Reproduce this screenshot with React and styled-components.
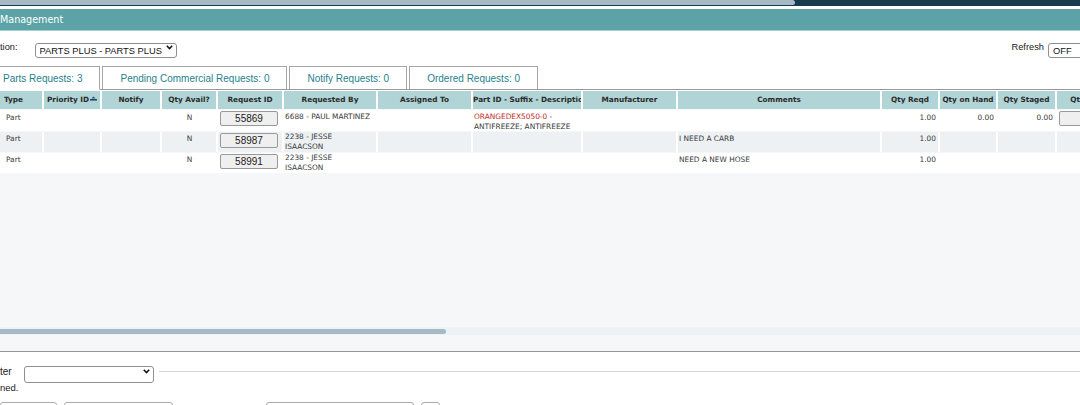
import React from "react";
import styled, { createGlobalStyle } from "styled-components";

const GlobalStyle = createGlobalStyle`
  html, body { margin: 0; padding: 0; background: #ffffff; overflow: hidden; }
  body { font-family: "Liberation Sans", Arial, sans-serif; color: #222; }
  * { box-sizing: border-box; }
`;

const Page = styled.div`
  width: 1080px;
  height: 405px;
  overflow: hidden;
`;

const TopStrip = styled.div`
  height: 6px;
  background: #173b4e;
  margin-bottom: 3px;
  display: flex;
`;

const TopThumb = styled.div`
  width: 795px;
  height: 4.5px;
  background: #a7b9c5;
  border-radius: 0 3px 3px 0;
`;

const TitleBar = styled.div`
  height: 22px;
  background: #5ca3a8;
  border-bottom: 1px solid #a6cfd1;
  color: #ffffff;
  font-family: "DejaVu Sans", Verdana, sans-serif;
  font-size: 9.6px;
  line-height: 21px;
`;

const Toolbar = styled.div`
  margin-top: 8px;
  height: 16px;
  display: flex;
  align-items: center;
  justify-content: space-between;
`;

const FieldGroup = styled.div`
  display: flex;
  align-items: center;
  margin-right: ${(p) => p.$mr || "0"};
`;

const Label = styled.span`
  font-size: ${(p) => p.$size || "9.3px"};
  color: #222;
  margin-right: ${(p) => p.$gap || "0px"};
`;

const SelectWrap = styled.div`
  position: relative;
  width: ${(p) => p.$w};
  height: ${(p) => p.$h || "15px"};
  flex: none;
`;

const Select = styled.select`
  appearance: none;
  -webkit-appearance: none;
  font-family: "Liberation Sans", Arial, sans-serif;
  font-size: 9.3px;
  width: 100%;
  height: 100%;
  padding: 0 0 0 4px;
  border: 1px solid #8f8f8f;
  border-radius: 3px;
  background: #ffffff;
  color: #111;
  margin: 0;
  outline: none;
`;

const Chevron = styled.svg`
  position: absolute;
  right: 4px;
  top: 50%;
  margin-top: -2.5px;
  pointer-events: none;
`;

const ChevronIcon = () => (
  <Chevron width="7" height="5" viewBox="0 0 7 5">
    <path d="M0.8 0.8 L3.5 3.6 L6.2 0.8" fill="none" stroke="#111" strokeWidth="1.5" />
  </Chevron>
);

const TabBar = styled.div`
  margin-top: 11px;
  display: flex;
  gap: 2px;
  border-bottom: 1px solid #9a9a9a;
  height: 24px;
`;

const Tab = styled.div`
  height: 24px;
  margin-bottom: -1px;
  padding: 0 17px;
  display: flex;
  align-items: center;
  border: 1px solid #a5a5a5;
  border-bottom: 1px solid ${(p) => (p.$active ? "#ffffff" : "#9a9a9a")};
  background: #ffffff;
  color: #277f8d;
  font-size: 10px;
  white-space: nowrap;
  margin-left: ${(p) => (p.$active ? "-15px" : "0")};
`;

const TablePanel = styled.div`
  margin-top: 1px;
  height: 261px;
  background: #f5f7f9;
  border-bottom: 1px solid #959595;
  display: flex;
  flex-direction: column;
`;

const COLS = "42px 56px 58px 54px 64px 92px 93px 108px 93px 202px 56px 56px 57px 80px";

const HeadRow = styled.div`
  display: grid;
  grid-template-columns: ${COLS};
  column-gap: 2px;
  height: 18px;
  flex: none;
  background: #ffffff;
  margin-bottom: 1px;
`;

const HeadCell = styled.div`
  background: #b1d4d6;
  font-family: "DejaVu Sans", Verdana, sans-serif;
  font-weight: bold;
  font-size: 7.3px;
  line-height: 18px;
  color: #2a2a2a;
  white-space: nowrap;
  overflow: hidden;
  text-align: ${(p) => (p.$left ? "left" : "center")};
  padding-left: ${(p) => (p.$left ? "4px" : "0")};
`;

const Row = styled.div`
  display: grid;
  grid-template-columns: ${COLS};
  column-gap: 2px;
  height: ${(p) => p.$h}px;
  flex: none;
  background: #ffffff;
  margin-bottom: 1px;
  & > * {
    background: ${(p) => (p.$shade ? "#edf1f3" : "#ffffff")};
  }
`;

const Cell = styled.div`
  font-family: "DejaVu Sans", Verdana, sans-serif;
  font-size: 7.4px;
  line-height: ${(p) => p.$lh || "10px"};
  color: #3a3a3a;
  padding: ${(p) => p.$pt || "3px"} ${(p) => (p.$right ? "2px" : "0")} 0
    ${(p) => p.$pl || "1px"};
  text-align: ${(p) => (p.$center ? "center" : p.$right ? "right" : "left")};
  white-space: nowrap;
  overflow: hidden;
`;

const PartId = styled.span`
  color: #c0302a;
`;

const IdButton = styled.button`
  display: block;
  margin: 1px 0 0 2px;
  width: ${(p) => p.$w || "58px"};
  height: 15px;
  padding: 0;
  font-family: "Liberation Sans", Arial, sans-serif;
  font-size: 10px;
  color: #222;
  background: #efefef;
  border: 1px solid #999999;
  border-radius: 2px;
`;

const ButtonCell = styled.div`
  overflow: hidden;
`;

const Filler = styled.div`
  flex: 1;
`;

const ScrollTrack = styled.div`
  height: 8px;
  flex: none;
  background: #ebf1f4;
  margin-bottom: 16px;
  display: flex;
  align-items: center;
`;

const ScrollThumb = styled.div`
  width: 446px;
  height: 5px;
  background: #a6bac6;
  border-radius: 0 3px 3px 0;
`;

const FilterRow = styled.div`
  margin-top: 11px;
  height: 17px;
  display: flex;
  align-items: center;
`;

const Rule = styled.div`
  flex: 1;
  height: 1px;
  background: #d6d6d6;
  margin-left: 5px;
`;

const Note = styled.div`
  margin-top: 2px;
  font-size: 9.5px;
  line-height: 12px;
  color: #222;
`;

const ActionRow = styled.div`
  margin-top: 8px;
  display: flex;
  gap: 7px;
`;

const ActionButton = styled.div`
  width: ${(p) => p.$w};
  height: 20px;
  flex: none;
  border: 1px solid #ababab;
  border-radius: 3px;
  background: #ffffff;
  margin-left: ${(p) => p.$ml || "0"};
`;

const SortIcon = () => (
  <svg width="7" height="6" viewBox="0 0 7 6" style={{ marginLeft: 1 }}>
    <polygon points="1.5,2.5 3.5,0.5 5.5,2.5" fill="#1d4a72" />
    <rect x="0" y="3" width="7" height="1.6" fill="#1d4a72" />
  </svg>
);

const headers = [
  "Type",
  "Priority ID",
  "Notify",
  "Qty Avail?",
  "Request ID",
  "Requested By",
  "Assigned To",
  "Part ID - Suffix - Description",
  "Manufacturer",
  "Comments",
  "Qty Reqd",
  "Qty on Hand",
  "Qty Staged",
  "Qty on Order",
];

const rows = [
  {
    id: "55869",
    h: 21,
    by: ["6688 - PAUL MARTINEZ"],
    part: true,
    comment: "",
    reqd: "1.00",
    hand: "0.00",
    staged: "0.00",
    btn: true,
  },
  {
    id: "58987",
    h: 20,
    by: ["2238 - JESSE", "ISAACSON"],
    part: false,
    comment: "I NEED A CARB",
    reqd: "1.00",
  },
  {
    id: "58991",
    h: 20,
    by: ["2238 - JESSE", "ISAACSON"],
    part: false,
    comment: "NEED A NEW HOSE",
    reqd: "1.00",
  },
];

export default function App() {
  return (
    <>
      <GlobalStyle />
      <Page>
        <TopStrip>
          <TopThumb />
        </TopStrip>
        <TitleBar>Management</TitleBar>
        <Toolbar>
          <FieldGroup>
            <Label $gap="17px">tion:</Label>
            <SelectWrap $w="142px">
              <Select defaultValue="pp">
                <option value="pp">PARTS PLUS - PARTS PLUS</option>
              </Select>
              <ChevronIcon />
            </SelectWrap>
          </FieldGroup>
          <FieldGroup $mr="-30px">
            <Label $gap="4px">Refresh</Label>
            <SelectWrap $w="62px">
              <Select defaultValue="off">
                <option value="off">OFF</option>
              </Select>
              <ChevronIcon />
            </SelectWrap>
          </FieldGroup>
        </Toolbar>
        <TabBar>
          <Tab $active>Parts Requests: 3</Tab>
          <Tab>Pending Commercial Requests: 0</Tab>
          <Tab>Notify Requests: 0</Tab>
          <Tab>Ordered Requests: 0</Tab>
        </TabBar>
        <TablePanel>
          <HeadRow>
            {headers.map((h, i) => (
              <HeadCell key={h} $left={i === 0}>
                {h}
                {i === 1 && <SortIcon />}
              </HeadCell>
            ))}
          </HeadRow>
          {rows.map((r, i) => (
            <Row key={r.id} $shade={i === 1} $h={r.h}>
              <Cell $pl="6px" $pt={i === 0 ? "3px" : "2px"}>Part</Cell>
              <Cell />
              <Cell />
              <Cell $center $pt={i === 0 ? "3px" : "2px"}>N</Cell>
              <ButtonCell>
                <IdButton>{r.id}</IdButton>
              </ButtonCell>
              <Cell $pt={r.by.length > 1 ? "0px" : "2px"}>
                {r.by.map((l) => (
                  <div key={l}>{l}</div>
                ))}
              </Cell>
              <Cell />
              <Cell $pt="2px" $lh="9.5px">
                {r.part && (
                  <>
                    <div>
                      <PartId>ORANGEDEX5050-0</PartId> -
                    </div>
                    <div>ANTIFREEZE; ANTIFREEZE</div>
                  </>
                )}
              </Cell>
              <Cell />
              <Cell $pt={i === 0 ? "3px" : "2px"}>{r.comment}</Cell>
              <Cell $right $pt={i === 0 ? "3px" : "2px"}>{r.reqd}</Cell>
              <Cell $right $pt="3px">{r.hand || ""}</Cell>
              <Cell $right $pt="3px">{r.staged || ""}</Cell>
              <ButtonCell>{r.btn && <IdButton $w="40px" />}</ButtonCell>
            </Row>
          ))}
          <Filler />
          <ScrollTrack>
            <ScrollThumb />
          </ScrollTrack>
        </TablePanel>
        <FilterRow>
          <Label $size="10px" $gap="12px">ter</Label>
          <SelectWrap $w="130px" $h="17px">
            <Select defaultValue="">
              <option value=""></option>
            </Select>
            <ChevronIcon />
          </SelectWrap>
          <Rule />
        </FilterRow>
        <Note>ned.</Note>
        <ActionRow>
          <ActionButton $w="57px" />
          <ActionButton $w="109px" />
          <ActionButton $w="148px" $ml="86px" />
          <ActionButton $w="19px" />
        </ActionRow>
      </Page>
    </>
  );
}
